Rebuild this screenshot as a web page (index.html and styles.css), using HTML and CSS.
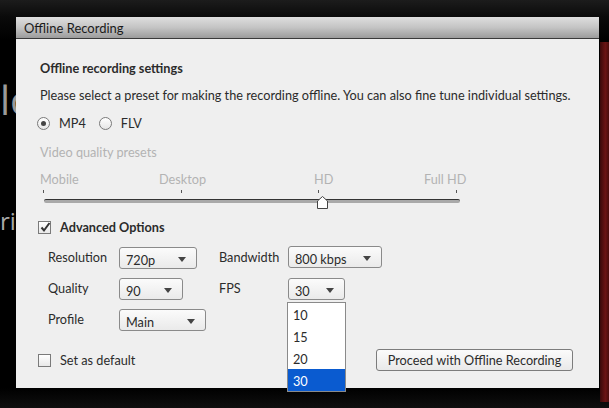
FILE: index.html
```html
<!DOCTYPE html>
<html>
<head>
<meta charset="utf-8">
<link rel="stylesheet" href="styles.css">
</head>
<body>
<div class="backdrop">
  <span class="bg-word bg-word-1">lc</span>
  <span class="bg-word bg-word-2">rix</span>
  <div class="red-strip"></div>
</div>
<div class="dialog">
  <div class="titlebar">Offline Recording</div>
  <div class="content">
    <div class="heading">Offline recording settings</div>
    <div class="para">Please select a preset for making the recording offline. You can also fine tune individual settings.</div>
    <div class="radios">
      <span class="radio checked"></span><span class="radio-label">MP4</span>
      <span class="radio"></span><span class="radio-label">FLV</span>
    </div>
    <div class="presets-title">Video quality presets</div>
    <div class="slider">
      <div class="slider-labels">
        <span class="sl sl-mobile">Mobile</span>
        <span class="sl sl-desktop">Desktop</span>
        <span class="sl sl-hd">HD</span>
        <span class="sl sl-full">Full HD</span>
      </div>
      <div class="ticks">
        <span class="tick"></span><span class="tick"></span><span class="tick"></span><span class="tick"></span>
      </div>
      <div class="track-wrap">
        <div class="track"></div>
        <svg class="thumb" width="11" height="13" viewBox="0 0 11 13"><path d="M5.5 0.5 L10.5 5 L10.5 12.5 L0.5 12.5 L0.5 5 Z" fill="#fff" stroke="#444" stroke-width="1"/></svg>
      </div>
    </div>
    <div class="adv">
      <span class="checkbox"><svg width="13" height="13" viewBox="0 0 13 13"><path d="M2.5 6.5 L5 9.5 L10.5 2" fill="none" stroke="#333" stroke-width="2"/></svg></span>
      <span class="adv-label">Advanced Options</span>
    </div>
    <div class="grid">
      <span class="lbl">Resolution</span>
      <div class="select w-res"><span>720p</span><i class="arrow"></i></div>
      <span class="lbl">Bandwidth</span>
      <div class="select w-bw"><span>800 kbps</span><i class="arrow"></i></div>

      <span class="lbl">Quality</span>
      <div class="select w-q"><span>90</span><i class="arrow"></i></div>
      <span class="lbl">FPS</span>
      <div class="fps-cell">
        <div class="select w-fps"><span>30</span><i class="arrow"></i></div>
        <ul class="dropdown">
          <li>10</li>
          <li>15</li>
          <li>20</li>
          <li class="sel">30</li>
        </ul>
      </div>

      <span class="lbl">Profile</span>
      <div class="select w-prof"><span>Main</span><i class="arrow"></i></div>
    </div>
    <div class="footer">
      <div class="default">
        <span class="checkbox"></span>
        <span class="default-label">Set as default</span>
      </div>
      <button class="proceed">Proceed with Offline Recording</button>
    </div>
  </div>
</div>
</body>
</html>
```
FILE: styles.css
```css
* { box-sizing: border-box; }
html, body { margin: 0; padding: 0; }
body {
  width: 609px;
  height: 408px;
  overflow: hidden;
  background: #000;
  font-family: "Lato", "Open Sans", sans-serif;
  color: #2b2b2b;
  position: relative;
}
.backdrop {
  position: absolute;
  inset: 0;
  background: linear-gradient(#1c1c1c, #0a0a0a 17px, #000 40px, #000 388px, #0f0f0f 408px);
}
.bg-word {
  position: absolute;
  font-family: "Open Sans", sans-serif;
  font-size: 40px;
  line-height: 40px;
}
.bg-word-1 { left: 0; top: 80px; color: #9a9a9a; }
.bg-word-2 { left: 0; top: 209px; font-size: 24px; line-height: 24px; color: #a8a8a8; }
.red-strip {
  position: absolute;
  left: 600px;
  top: 42px;
  width: 9px;
  height: 360px;
  background: linear-gradient(90deg, #3a0a0a, #6a1414 60%, #4a0e0e);
}
.dialog {
  position: relative;
  margin: 17px 0 0 16px;
  width: 583px;
  height: 371px;
  background: #efefef;
}
.titlebar {
  height: 22px;
  padding-left: 8px;
  font-size: 13px;
  line-height: 22px;
  color: #1a1a1a;
  background: linear-gradient(#dedede, #c4c4c4 50%, #9c9c9c);
  border-bottom: 1px solid #3a3a3a;
}
.content {
  padding: 20px 26px 0 24px;
  position: relative;
}
.heading {
  height: 18px;
  line-height: 18px;
  font-weight: bold;
  font-size: 12.7px;
}
.para {
  margin-top: 9px;
  height: 18px;
  line-height: 18px;
  font-size: 12.7px;
  white-space: nowrap;
}
.radios {
  margin-top: 10px;
  height: 18px;
  display: flex;
  align-items: center;
  margin-left: -3px;
  font-size: 12.7px;
}
.radio {
  width: 13px;
  height: 13px;
  border: 1px solid #7a7a7a;
  border-radius: 50%;
  background: linear-gradient(#ffffff, #e6e6e6);
  position: relative;
}
.radio.checked::after {
  content: "";
  position: absolute;
  left: 3px; top: 3px;
  width: 5px; height: 5px;
  border-radius: 50%;
  background: #444;
}
.radio-label { margin-left: 9px; margin-right: 13px; }
.presets-title {
  margin-top: 11px;
  height: 18px;
  line-height: 18px;
  color: #b3b3b3;
  font-size: 12.7px;
}
.slider { width: 424px; }
.slider-labels {
  margin-top: 9px;
  height: 18px;
  position: relative;
  color: #b3b3b3;
  font-size: 12.7px;
  line-height: 18px;
  white-space: nowrap;
}
.sl { position: absolute; top: 0; }
.sl-mobile { left: 0; }
.sl-desktop { left: 119px; }
.sl-hd { left: 274px; }
.sl-full { left: 384px; }
.ticks {
  height: 6px;
  display: flex;
  justify-content: space-between;
  padding: 2px 3px 0 3px;
  margin-right: 4px;
}
.tick { width: 1px; height: 3px; background: #555; }
.track-wrap {
  position: relative;
  height: 14px;
  margin-top: 1px;
}
.track {
  position: absolute;
  left: 4px;
  top: 4px;
  width: 416px;
  height: 4px;
  background: #a9a9a9;
  border-top: 1px solid #333;
  border-radius: 2px;
}
.thumb { position: absolute; left: 277px; top: 1px; }
.adv {
  margin-top: 9px;
  height: 18px;
  display: flex;
  align-items: center;
  margin-left: -2px;
}
.checkbox {
  width: 13px;
  height: 13px;
  border: 1px solid #7a7a7a;
  background: linear-gradient(#ffffff, #e8e8e8);
  display: inline-flex;
  position: relative;
}
.checkbox svg { position: absolute; left: 0; top: -1px; }
.adv-label { margin-left: 9px; font-weight: bold; font-size: 12.7px; }
.grid {
  margin-top: 11px;
  margin-left: 8px;
  display: grid;
  grid-template-columns: 71px 100px 69px auto;
  grid-auto-rows: 22px;
  row-gap: 9px;
  font-size: 12.7px;
}
.lbl { line-height: 18px; padding-top: 1px; }
.select {
  height: 22px;
  border: 1px solid #8a8a8a;
  border-radius: 3px;
  background: linear-gradient(#fbfbfb, #eaeaea);
  display: flex;
  align-items: center;
  justify-content: space-between;
  padding: 4px 10px 0 6px;
  font-size: 12.7px;
}
.arrow {
  width: 0; height: 0;
  margin-top: -2px;
  border-left: 4px solid transparent;
  border-right: 4px solid transparent;
  border-top: 5px solid #444;
}
.w-res { width: 78px; }
.w-bw { width: 94px; margin-top: -1px; }
.w-q { width: 64px; }
.w-fps { width: 57px; }
.w-prof { width: 87px; }
.fps-cell { position: relative; }
.dropdown {
  position: absolute;
  left: -1px;
  top: 24px;
  width: 59px;
  margin: 0;
  padding: 0;
  list-style: none;
  border: 1px solid #8a8a8a;
  background: #fff;
  z-index: 5;
}
.dropdown li {
  height: 22px;
  line-height: 19px;
  padding: 3px 0 0 5px;
  font-size: 12.7px;
}
.dropdown li.sel { background: #0a5bd0; color: #fff; }
.footer {
  margin-top: 18px;
  display: flex;
  justify-content: space-between;
  align-items: center;
  height: 22px;
}
.default { display: flex; align-items: center; margin-left: -2px; }
.default-label { margin-left: 9px; font-size: 12.7px; }
.proceed {
  width: 197px;
  height: 22px;
  border: 1px solid #7c7c7c;
  border-radius: 3px;
  background: linear-gradient(#fbfbfb, #e9e9e9);
  font-family: "Lato", "Open Sans", sans-serif;
  font-size: 12.7px;
  color: #2b2b2b;
  padding: 0;
}
```
